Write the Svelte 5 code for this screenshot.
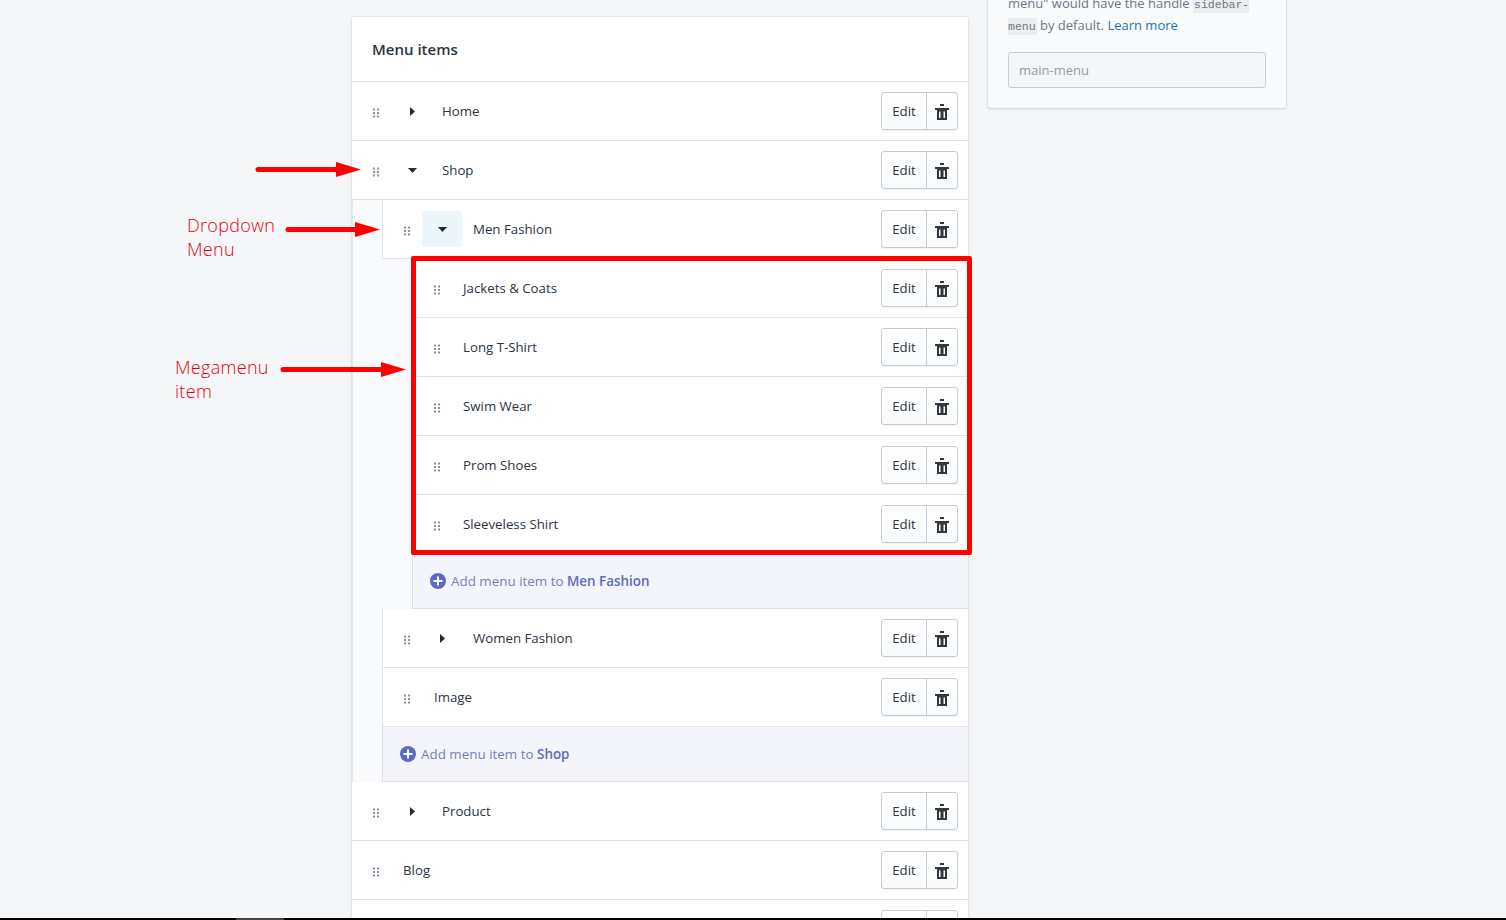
<script>
  const level3 = ['Jackets & Coats', 'Long T-Shirt', 'Swim Wear', 'Prom Shoes', 'Sleeveless Shirt'];
</script>

{#snippet handle()}
  <svg class="handle" width="6" height="10" viewBox="0 0 6 10" aria-hidden="true">
    <path d="M0 .5h2v2H0zM4 .5h2v2H4zM0 4h2v2H0zM4 4h2v2H4zM0 7.500h2v2H0zM4 7.500h2v2H4z" />
  </svg>
{/snippet}

{#snippet actions()}
  <div class="actions">
    <button class="btn edit">Edit</button>
    <button class="btn trash" aria-label="Delete">
      <svg width="14" height="16" viewBox="0 0 14 16" aria-hidden="true">
        <path d="M5 0h4v2H5zM0 4h14v2H0zM2 6h10v10H2zM4 7.500v6.500h1.500V7.500zM8.500 7.500v6.500H10V7.500z" fill-rule="evenodd" />
      </svg>
    </button>
  </div>
{/snippet}

{#snippet row(label, state, active)}
  <div class="row" class:plain={!state}>
    {@render handle()}
    {#if state}
      <span class="toggle" class:active>
        {#if state === 'open'}
          <svg width="9" height="5" viewBox="0 0 9 5" aria-hidden="true"><path d="M0 0h9L4.500 5z" /></svg>
        {:else}
          <svg width="5" height="9" viewBox="0 0 5 9" aria-hidden="true"><path d="M0 0l5 4.500L0 9z" /></svg>
        {/if}
      </span>
    {/if}
    <span class="label">{label}</span>
    {@render actions()}
  </div>
{/snippet}

{#snippet addRow(name)}
  <div class="add">
    <svg width="16" height="16" viewBox="0 0 16 16" aria-hidden="true">
      <circle cx="8" cy="8" r="8" />
      <path d="M7 3.500h2V7h3.500v2H9v3.500H7V9H3.500V7H7z" fill="#fff" />
    </svg>
    <span>Add menu item to <b>{name}</b></span>
  </div>
{/snippet}

<div class="page">
  <section class="card">
    <h2>Menu items</h2>
    {@render row('Home', 'closed')}
    {@render row('Shop', 'open')}
    <div class="nested">
      {@render row('Men Fashion', 'open', true)}
      <div class="nested deep">
        {#each level3 as item}
          {@render row(item)}
        {/each}
        {@render addRow('Men Fashion')}
      </div>
      {@render row('Women Fashion', 'closed')}
      {@render row('Image')}
      {@render addRow('Shop')}
    </div>
    {@render row('Product', 'closed')}
    {@render row('Blog')}
    {@render row('')}
  </section>

  <aside class="side">
    <p>menu" would have the handle <code>sidebar-menu</code> by default. <a href="#learn">Learn more</a></p>
    <input value="main-menu" disabled />
  </aside>

  <!-- annotations drawn on top of the screenshot -->
  <div class="redbox"></div>
  <svg class="arrows" width="1506" height="918" viewBox="0 0 1506 918" aria-hidden="true">
    <path d="M258 169.500H340M288 229.500H358M283 369.500H385" stroke="#f00" stroke-width="5" stroke-linecap="round" fill="none" />
    <path d="M336 162l25 7.500-25 7.500zM355 222l25 7.500-25 7.500zM381 362l25 7.500-25 7.500z" fill="#f00" />
  </svg>
  <div class="note dropdown">Dropdown<br />Menu</div>
  <div class="note mega">Megamenu<br />item</div>
</div>
<div class="taskbar"><span></span></div>

<style>
  :global(body) {
    margin: 0;
    background: #f4f6f8;
    font-family: "Open Sans", "Noto Sans", sans-serif;
    font-size: 13.25px;
    color: #2a343f;
  }
  .page {
    position: relative;
    display: flex;
    align-items: flex-start;
    gap: 20px;
    height: 918px;
    padding-left: 352px;
    overflow: hidden;
    box-sizing: border-box;
  }
  .taskbar {
    height: 2px;
    background: #000;
  }
  .taskbar span {
    display: block;
    width: 48px;
    height: 2px;
    margin-left: 236px;
    background: #444;
  }
  .card {
    width: 616px;
    flex: none;
    margin-top: 17px;
    background: #fff;
    border-radius: 3px;
    box-shadow: 0 0 0 1px rgba(63, 63, 68, 0.05), 0 1px 3px 0 rgba(63, 63, 68, 0.15);
  }
  h2 {
    margin: 0;
    height: 64px;
    padding-left: 20px;
    font-size: 15px;
    font-weight: 600;
    line-height: 65px;
    border-bottom: 1px solid #dfe3e8;
  }
  .row {
    display: flex;
    align-items: center;
    height: 58px;
    padding: 0 10px 0 21px;
    background: #fff;
    border-bottom: 1px solid #dfe3e8;
  }
  .handle {
    flex: none;
    width: 6px;
    margin-top: 3px;
    fill: #8493a3;
  }
  .toggle {
    flex: none;
    display: flex;
    align-items: center;
    justify-content: center;
    width: 40px;
    height: 36px;
    margin: 0 10px 0 13px;
    border-radius: 3px;
    fill: #212b36;
  }
  .nested .toggle {
    margin: 0 11px 0 12px;
  }
  .toggle.active {
    background: #ebf5fa;
  }
  .plain .label {
    margin-left: 24px;
  }
  .deep .plain .label {
    margin-left: 23px;
  }
  .actions {
    display: flex;
    margin-left: auto;
  }
  .btn {
    height: 38px;
    padding: 0;
    font: inherit;
    color: #2a343f;
    background: linear-gradient(180deg, #fff, #f9fafb);
    border: 1px solid #c4cdd5;
    box-shadow: 0 1px 0 0 rgba(22, 29, 37, 0.05);
  }
  .edit {
    width: 46px;
    border-radius: 3px 0 0 3px;
  }
  .trash {
    display: flex;
    align-items: center;
    justify-content: center;
    width: 32px;
    margin-left: -1px;
    padding-top: 2px;
    border-radius: 0 3px 3px 0;
    fill: #31373d;
  }
  .nested {
    padding-left: 31px;
    background: #f9fafb;
    box-shadow: inset 1px 0 0 #e4e7eb;
  }
  .nested > :global(.row),
  .nested > :global(.add) {
    box-shadow: -1px 0 0 #dfe3e8;
  }
  .nested.deep {
    padding-left: 30px;
    box-shadow: none;
  }
  .add {
    display: flex;
    align-items: center;
    gap: 5px;
    height: 54px;
    padding-left: 17px;
    font-size: 13.4px;
    color: #747dc6;
    fill: #5c6ac4;
    background: #f4f5fa;
    border-bottom: 1px solid #dfe3e8;
  }
  .add b {
    font-weight: 600;
    color: #5f6bb8;
  }
  .side {
    width: 298px;
    flex: none;
    box-sizing: border-box;
    margin-top: -12px;
    padding: 5px 20px 20px;
    font-size: 13px;
    background: #f9fafb;
    border-radius: 3px;
    box-shadow: 0 0 0 1px rgba(63, 63, 68, 0.05), 0 1px 3px 0 rgba(63, 63, 68, 0.15);
  }
  .side p {
    margin: 0 0 15px;
    line-height: 20px;
    color: #6b7885;
  }
  code {
    padding: 2px 1px;
    font-family: "Liberation Mono", monospace;
    font-size: 11.5px;
    background: #ebeef0;
  }
  .side a {
    color: #1a76ad;
    text-decoration: none;
  }
  input {
    display: block;
    width: 100%;
    height: 36px;
    box-sizing: border-box;
    padding: 0 10px;
    font: inherit;
    color: #919eab;
    background: #f4f6f8;
    border: 1px solid #c4cdd5;
    border-radius: 3px;
  }
  .redbox {
    position: absolute;
    left: 411px;
    top: 256px;
    width: 561px;
    height: 299px;
    box-sizing: border-box;
    border: 5px solid #f00;
    border-radius: 2px;
  }
  .arrows {
    position: absolute;
    left: 0;
    top: 0;
    pointer-events: none;
  }
  .note {
    position: absolute;
    font-size: 18px;
    line-height: 24px;
    letter-spacing: 0.3px;
    font-weight: 300;
    color: #e5000f;
  }
  .dropdown {
    left: 187px;
    top: 213px;
  }
  .mega {
    left: 175px;
    top: 355px;
  }
</style>
